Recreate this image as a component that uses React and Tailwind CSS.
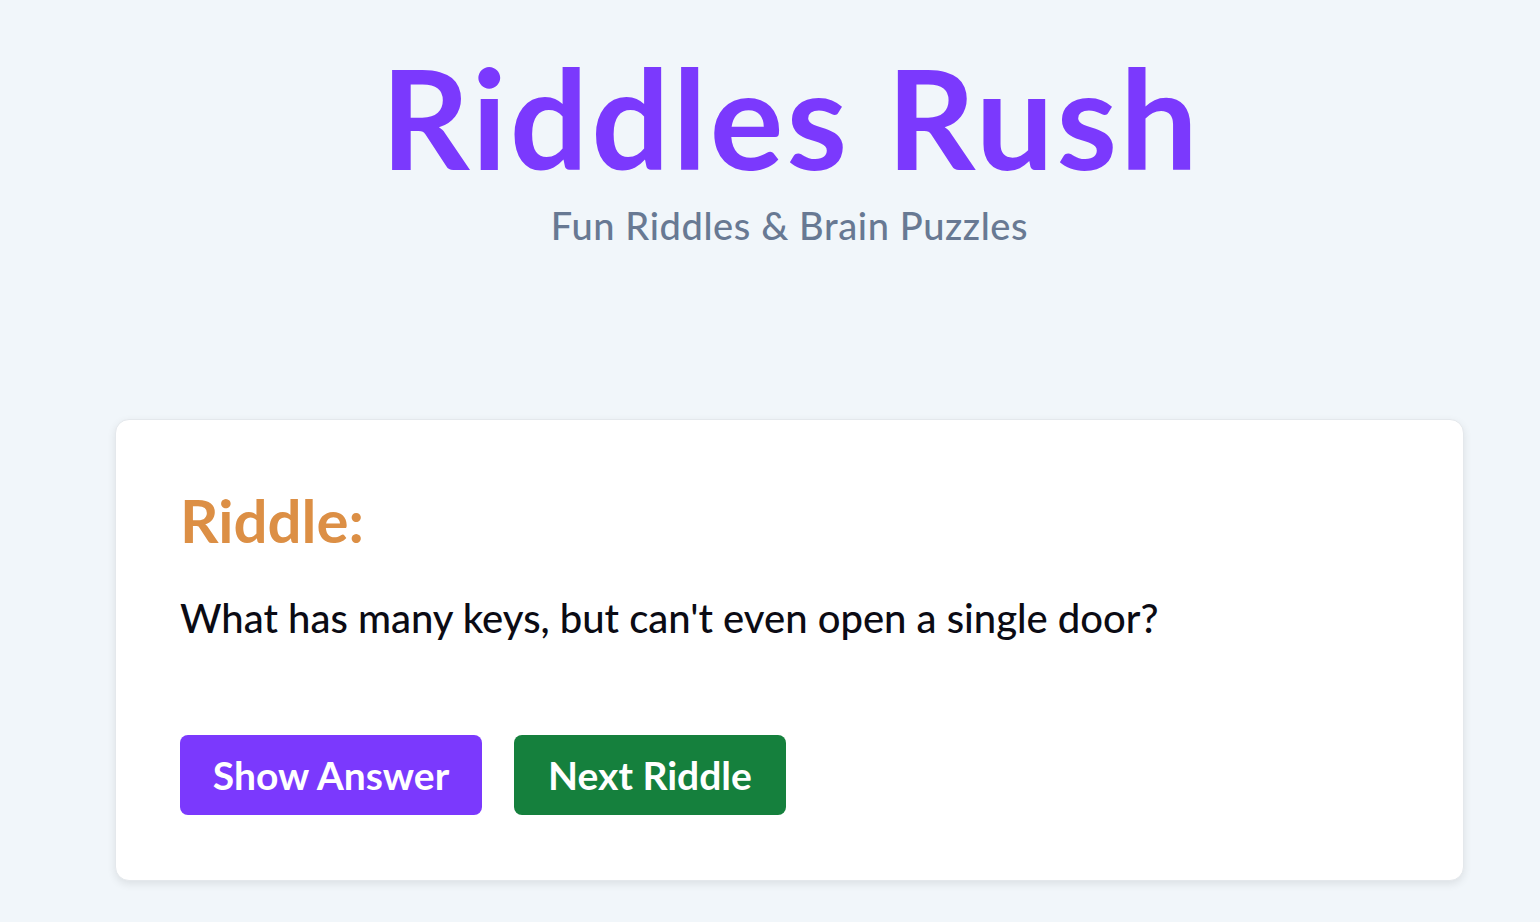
import React, { useState } from 'react';

const riddles = [
  { q: "What has many keys, but can't even open a single door?", a: 'A piano.' },
  { q: 'What has hands but can not clap?', a: 'A clock.' },
];

function App() {
  const [index, setIndex] = useState(0);
  const [showAnswer, setShowAnswer] = useState(false);

  const riddle = riddles[index];

  return (
    <div className="min-h-screen bg-[#f1f6fa] font-['Lato','Noto_Sans',sans-serif]">
      <div className="ml-[115px] w-[1349px]">
        <header className="flex flex-col items-center pt-[41px]">
          <h1 className="pl-[3px] text-[138px] font-bold leading-[1.1] tracking-[3px] text-[#7b39fd]">Riddles Rush</h1>
          <p className="mt-[13px] text-[38px] font-medium leading-none tracking-[0.6px] text-[#687993]">Fun Riddles &amp; Brain Puzzles</p>
        </header>

        <main className="mt-[175px]">
          <div className="rounded-[14px] border border-[#e4e8ec] bg-white px-[64px] pt-[70px] pb-[65px] shadow-[0_3px_8px_rgba(0,0,0,0.09)]">
            <h2 className="text-[60px] font-bold leading-none text-[#dc8f45]">Riddle:</h2>
            <p className="mt-[48px] text-[40px] font-medium leading-none text-[#0b0b14]">{riddle.q}</p>
            {showAnswer && <p className="mt-4 text-[30px] text-[#15803d]">{riddle.a}</p>}
            <div className="mt-[97px] flex gap-[32px]">
              <button
                onClick={() => setShowAnswer(!showAnswer)}
                className="h-[80px] w-[302px] rounded-[8px] bg-[#7b39fd] text-[39px] font-bold text-white"
              >
                Show Answer
              </button>
              <button
                onClick={() => {
                  setIndex((index + 1) % riddles.length);
                  setShowAnswer(false);
                }}
                className="h-[80px] w-[272px] rounded-[8px] bg-[#15803d] text-[39px] font-bold text-white"
              >
                Next Riddle
              </button>
            </div>
          </div>
        </main>
      </div>
    </div>
  );
}

export default App;
